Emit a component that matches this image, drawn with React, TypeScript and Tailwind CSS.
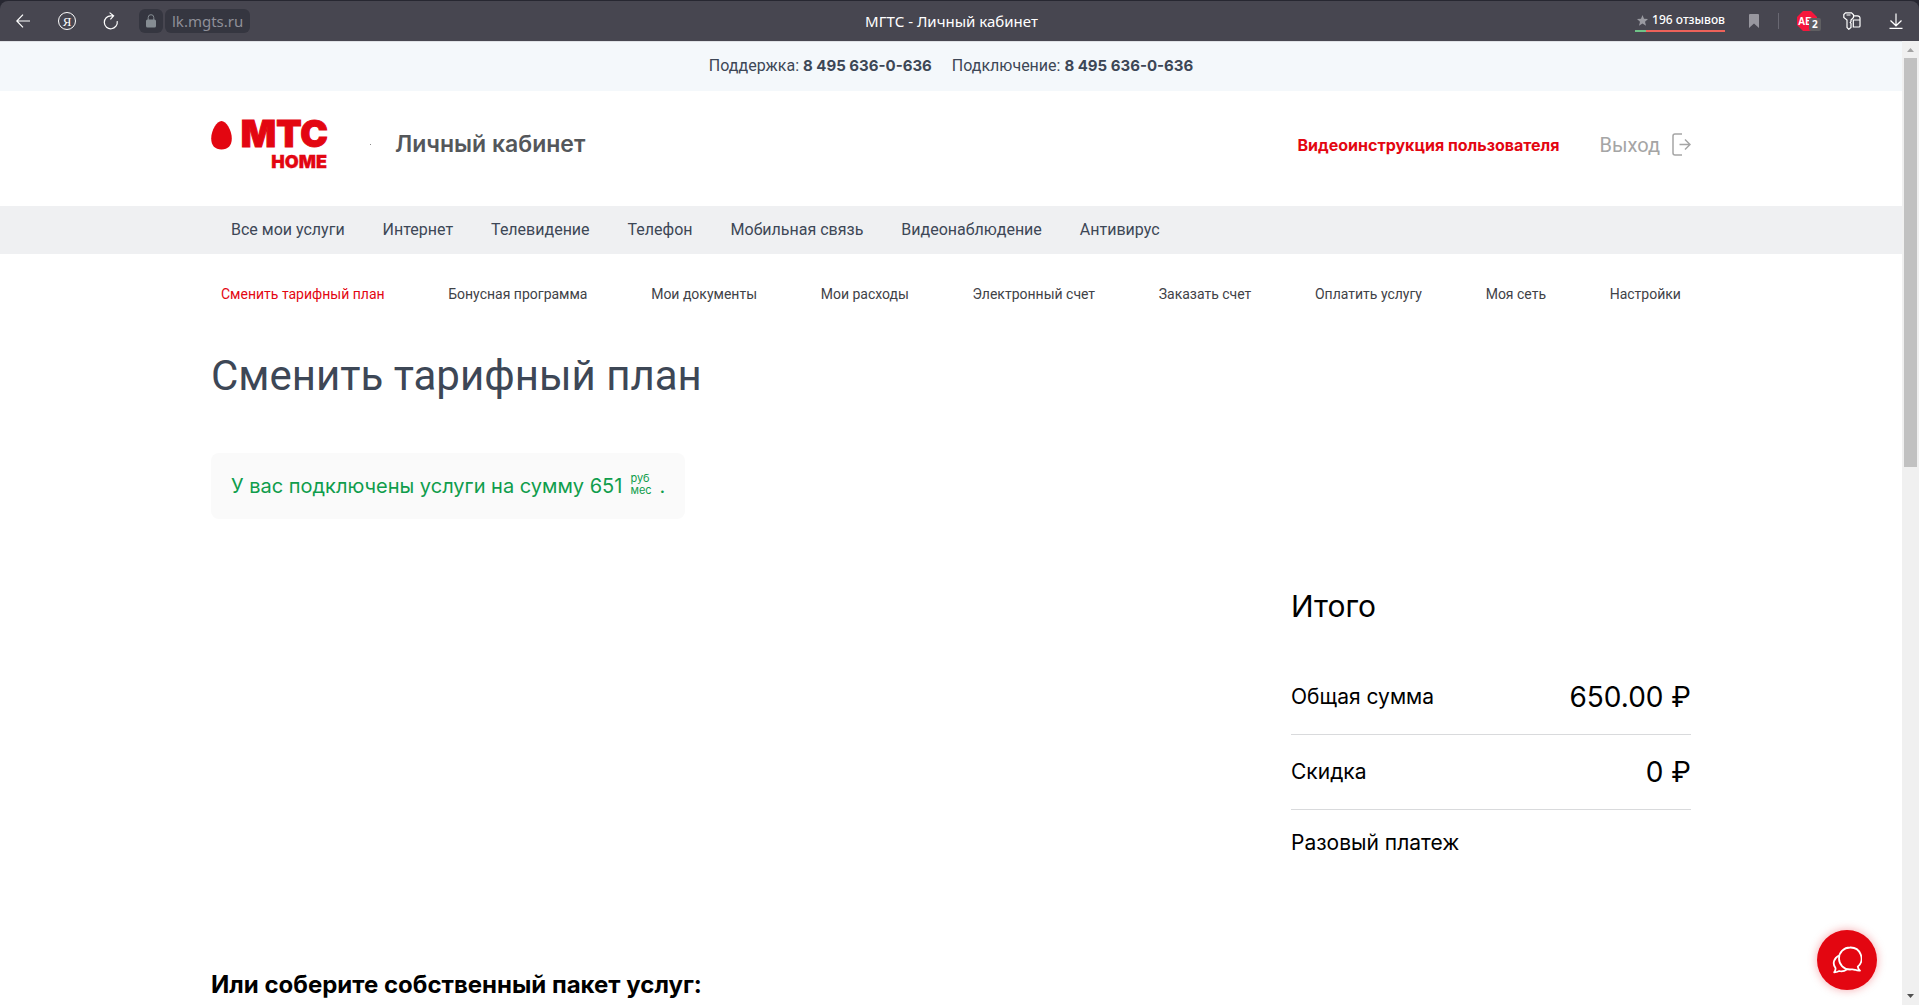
import React from "react";

const mainNav = [
  "Все мои услуги",
  "Интернет",
  "Телевидение",
  "Телефон",
  "Мобильная связь",
  "Видеонаблюдение",
  "Антивирус",
];

const subNav = [
  "Сменить тарифный план",
  "Бонусная программа",
  "Мои документы",
  "Мои расходы",
  "Электронный счет",
  "Заказать счет",
  "Оплатить услугу",
  "Моя сеть",
  "Настройки",
];

function BrowserBar() {
  return (
    <div className="shrink-0 bg-[#272731] pt-px font-['Noto_Sans',sans-serif]">
      <div className="grid h-10 grid-cols-[1fr_auto_1fr] items-center rounded-t-lg bg-[#474650] pr-4 text-white">
        <div className="flex items-center pl-4">
          <button type="button" aria-label="Назад">
            <svg width="14" height="14" viewBox="0 0 14 14" fill="none" stroke="currentColor" strokeWidth="1.2">
              <path d="M14 7H.8M7 .7.8 7 7 13.3" />
            </svg>
          </button>
          <button
            type="button"
            aria-label="Яндекс"
            className="ml-7 flex size-[18px] items-center justify-center rounded-full border border-white font-['Liberation_Serif',serif] text-[13px] leading-none"
          >
            Я
          </button>
          <button type="button" aria-label="Обновить" className="ml-[27px]">
            <svg width="16" height="18" viewBox="0 0 16 18" fill="none" stroke="currentColor" strokeWidth="1.2">
              <path d="M10 3.8H8A6.5 6.5 0 1 0 14.2 9.2M6.6.6l4 3.2-3.2 3.6" />
            </svg>
          </button>
          <div className="ml-5 flex size-6 items-center justify-center rounded-md bg-[#353640]">
            <svg width="10" height="14" viewBox="0 0 10 14">
              <path d="M2.2 6V3.5a2.8 2.8 0 0 1 5.6 0V6" fill="none" stroke="#868d93" />
              <rect y="5.5" width="10" height="8" rx="1.5" fill="#868d93" />
            </svg>
          </div>
          <div className="ml-0.5 flex h-6 items-center rounded-md bg-[#353640] px-[7px] text-[15px] text-[#8f8f98]">
            lk.mgts.ru
          </div>
        </div>
        <p className="text-[15px]">МГТС - Личный кабинет</p>
        <div className="flex items-center justify-end">
          <button type="button" className="text-xs">
            <span className="flex h-5 items-center gap-1 pl-0.5 font-medium">
              <svg width="11" height="11" viewBox="0 0 11 11" fill="#9a9aa1">
                <path d="M5.5 0 7 3.8l4 .3L8 6.7l1 4-3.5-2.2L2 10.7l1-4L0 4.1l4-.3z" />
              </svg>
              196 отзывов
            </span>
            <span className="flex h-0.5">
              <span className="w-[11px] bg-[#6fc287]" />
              <span className="grow bg-[#ee625a]" />
            </span>
          </button>
          <button type="button" aria-label="Закладка" className="ml-6">
            <svg width="10" height="14" viewBox="0 0 10 14" fill="#98979f">
              <path d="M0 1a1 1 0 0 1 1-1h8a1 1 0 0 1 1 1v13L5 9.5 0 14z" />
            </svg>
          </button>
          <span className="ml-[19px] h-4 w-px bg-[#696872]" />
          <button type="button" aria-label="Блокировщик" className="ml-[18px]">
            <svg width="24" height="20" viewBox="0 0 24 20" fontFamily="Noto Sans" fontWeight="700" fill="#fff">
              <path d="M6 0h8l6 6v8l-6 6H6l-6-6V6z" fill="#f5173c" />
              <text x="1" y="14" fontSize="10" fontFamily="Liberation Sans">
                AB
              </text>
              <rect x="12" y="7" width="12" height="13" rx="2" fill="#5f5f62" />
              <text x="15" y="17" fontSize="10">
                2
              </text>
            </svg>
          </button>
          <button type="button" aria-label="Пароли" className="ml-[22px]">
            <svg width="18" height="18" viewBox="0 0 18 18" fill="none" stroke="currentColor" strokeWidth="1.2">
              <path d="M2.500.8h6l2 2v2.700L8 8v1.500l-.8 1 .8 1v4L5.800 17.300 4 15.500V8L.8 5.500v-3zM3.500 3h4" />
              <path d="M10.300 8H17v6a1 1 0 0 1-1 1h-5.700V8zM10.500 3.800h4A2.500 2.500 0 0 1 17 6.300V8" />
            </svg>
          </button>
          <button type="button" aria-label="Загрузки" className="ml-7">
            <svg width="14" height="16" viewBox="0 0 14 16" fill="none" stroke="currentColor" strokeWidth="1.2">
              <path d="M7 .5v12M1.500 7.500 7 12.800l5.500-5.300M.5 15.300h13" />
            </svg>
          </button>
        </div>
      </div>
    </div>
  );
}

function Logo() {
  return (
    <a href="#" aria-label="МТС Home" className="block">
      <svg
        width="116"
        height="50"
        viewBox="0 0 116 50"
        fill="#e30611"
        stroke="#e30611"
        fontFamily="Inter"
        fontWeight="900"
        className="overflow-visible"
      >
        <path
          d="M10.500 1C15 1 20.800 10 20.800 18.500 20.800 25.500 17 29.500 10.500 29.500S.2 25.500.2 18.500C.2 10 6 1 10.500 1z"
          stroke="none"
        />
        <text x="117" y="27" fontSize="37" textAnchor="end">
          МТС
        </text>
        <text x="116" y="48" fontSize="18" strokeWidth="0.3" textAnchor="end">
          HOME
        </text>
      </svg>
    </a>
  );
}

function Header() {
  return (
    <header>
      <div className="flex h-[50px] items-center justify-center gap-5 border-t border-[#dfe2e6] bg-[#f4f8fb] pb-0.5 text-[#3d4756]">
        <p>
          Поддержка: <b className="font-[Inter,sans-serif] text-[15px]">8 495 636-0-636</b>
        </p>
        <p>
          Подключение: <b className="font-[Inter,sans-serif] text-[15px]">8 495 636-0-636</b>
        </p>
      </div>
      <div className="mx-auto flex h-[115px] max-w-[1480px] items-center pb-2">
        <Logo />
        <span className="ml-[43px] size-px bg-[#8a8a8a]" />
        <p className="ml-6 font-[Inter,sans-serif] text-[23px] font-semibold text-[#54575b]">Личный кабинет</p>
        <a href="#" className="ml-auto font-[Inter,sans-serif] font-bold text-[#e30611]">
          Видеоинструкция пользователя
        </a>
        <a href="#" className="ml-10 flex items-center gap-3 text-xl text-[#a5a5a5]">
          Выход
          <svg width="19" height="23" viewBox="0 0 19 23" fill="none" stroke="currentColor" strokeWidth="1.5">
            <path d="M10 1H3a2 2 0 0 0-2 2v17a2 2 0 0 0 2 2h7M7.500 11.500H18M13 6.500l5 5-5 5" />
          </svg>
        </a>
      </div>
      <nav className="bg-[#eff0f2]">
        <ul className="mx-auto flex h-12 max-w-[1480px] items-center gap-[38px] px-5 text-[#3d4756]">
          {mainNav.map((item) => (
            <li key={item}>
              <a href="#">{item}</a>
            </li>
          ))}
        </ul>
      </nav>
      <nav>
        <ul className="mx-auto flex h-20 max-w-[1480px] items-center justify-between px-2.5 text-sm text-[#3f4247]">
          {subNav.map((item, i) => (
            <li key={item}>
              <a href="#" className={i === 0 ? "text-[#e30611]" : ""}>
                {item}
              </a>
            </li>
          ))}
        </ul>
      </nav>
    </header>
  );
}

function Summary() {
  return (
    <section className="ml-auto w-[400px] text-black">
      <h2 className="text-[30px] leading-10">Итого</h2>
      <dl className="mt-[33px] text-[21px]">
        <div className="flex h-[76px] items-center justify-between border-b border-[#d9dadc]">
          <dt>Общая сумма</dt>
          <dd className="text-[28px]">650.00 ₽</dd>
        </div>
        <div className="flex h-[75px] items-center justify-between border-b border-[#d9dadc]">
          <dt>Скидка</dt>
          <dd className="text-[28px]">0 ₽</dd>
        </div>
        <div className="flex h-[66px] items-center">
          <dt>Разовый платеж</dt>
        </div>
      </dl>
    </section>
  );
}

function Scrollbar() {
  return (
    <div className="flex w-[17px] shrink-0 flex-col items-center bg-[#f0f0f0]">
      <svg width="17" height="17" viewBox="0 0 17 17" fill="#a3a3a3">
        <path d="M5 11h7L8.500 7z" />
      </svg>
      <div className="h-[409px] w-[13px] bg-[#c1c1c1]" />
      <svg width="17" height="17" viewBox="0 0 17 17" fill="#505050" className="mt-auto">
        <path d="M5 6h7l-3.500 4z" />
      </svg>
    </div>
  );
}

export default function App() {
  return (
    <div className="flex h-screen flex-col overflow-hidden bg-white font-[Roboto,sans-serif] text-base">
      <BrowserBar />
      <div className="flex min-h-0 grow">
        <div className="relative grow overflow-hidden">
          <Header />
          <main className="mx-auto max-w-[1480px] font-[Inter,sans-serif]">
            <h1 className="pt-[17px] font-[Roboto,sans-serif] text-[42px] leading-[50px] text-[#3d4756]">
              Сменить тарифный план
            </h1>
            <p className="mt-[52px] flex h-[66px] w-fit items-center rounded-lg bg-[#fafafa] px-5 text-xl text-[#0f9d4c]">
              У вас подключены услуги на сумму 651
              <span className="mx-2 pb-1 text-[11px] leading-3">
                руб
                <br />
                мес
              </span>
              .
            </p>
            <div className="mt-[67px]">
              <Summary />
            </div>
            <h2 className="mt-[93px] text-2xl font-bold text-black">Или соберите собственный пакет услуг:</h2>
          </main>
          <button
            type="button"
            aria-label="Чат"
            className="absolute right-[25px] bottom-[15px] flex size-[60px] items-center justify-center rounded-full bg-[#e30611] text-white shadow-[0_0_10px_rgba(227,6,17,0.35)]"
          >
            <svg width="30" height="28" viewBox="0 0 30 28" fill="none" stroke="currentColor" strokeWidth="1.8" strokeLinejoin="round">
              <path d="M18 1.500a11 11 0 1 0 0 22c2 0 3.500-.3 5 .300 1.500.7 3 1 5 .9-1.500-1.200-2-2.500-2.200-4A11 11 0 0 0 18 1.500z" />
              <path d="M7 9.500c-5 2.500-7 8-3.500 12.500.2 1.500-.3 3-1.300 4.300 2 0 3.500-.5 5-1.300 2.500.7 5 .3 8-1.800" />
            </svg>
          </button>
        </div>
        <Scrollbar />
      </div>
    </div>
  );
}
